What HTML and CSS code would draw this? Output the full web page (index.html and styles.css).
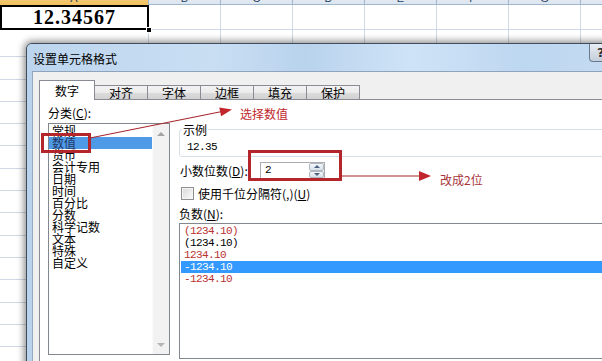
FILE: index.html
```html
<!DOCTYPE html>
<html lang="zh-CN">
<head>
<meta charset="UTF-8" />
<meta name="viewport" content="width=device-width, initial-scale=1" />
<title>设置单元格格式</title>
<link rel="stylesheet" href="styles.css">
</head>
<body>

<div class="sheet">
  <div class="col-heads">
    <div class="ch ch-a">A</div>
    <div class="ch">B</div>
    <div class="ch">C</div>
    <div class="ch">D</div>
    <div class="ch">E</div>
    <div class="ch">F</div>
    <div class="ch">G</div>
    <div class="ch">H</div>
  </div>
  <div class="row1">
    <div class="cell cell-a"><div class="sel">12.34567</div><span class="handle"></span></div>
    <div class="cell"></div>
    <div class="cell"></div>
    <div class="cell"></div>
    <div class="cell"></div>
    <div class="cell"></div>
    <div class="cell"></div>
    <div class="cell"></div>
  </div>
  <div class="rest">
    <div class="col"></div>
    <div class="col"></div>
    <div class="col"></div>
    <div class="col"></div>
    <div class="col"></div>
    <div class="col"></div>
    <div class="col"></div>
    <div class="col"></div>
  </div>
</div>

<div class="dialog">
  <div class="titlebar">
    <span class="title">设置单元格格式</span>
    <span class="help">?</span>
  </div>
  <div class="client">
    <div class="tabs">
      <div class="tab active">数字</div>
      <div class="tab">对齐</div>
      <div class="tab">字体</div>
      <div class="tab">边框</div>
      <div class="tab">填充</div>
      <div class="tab">保护</div>
    </div>
    <div class="panel">
      <div class="left-col">
        <div class="lbl">分类(<u>C</u>):</div>
        <div class="listbox cat">
          <ul class="items">
            <li>常规</li>
            <li class="on">数值</li>
            <li>货币</li>
            <li>会计专用</li>
            <li>日期</li>
            <li>时间</li>
            <li>百分比</li>
            <li>分数</li>
            <li>科学记数</li>
            <li>文本</li>
            <li>特殊</li>
            <li>自定义</li>
          </ul>
          <div class="vscroll"><span class="arr up"></span><span class="arr down"></span></div>
        </div>
      </div>

      <div class="right-col">
        <fieldset class="sample">
          <legend>示例</legend>
          <div class="num">12.35</div>
        </fieldset>

        <div class="dec-row">
          <label class="dec-lbl">小数位数(<u>D</u>):</label>
          <div class="spin">
            <span class="spin-val num">2</span>
            <span class="spin-btns">
              <span class="sb"><span class="tri up"></span></span>
              <span class="sb"><span class="tri down"></span></span>
            </span>
          </div>
        </div>

        <div class="chk-row">
          <span class="chk"></span>
          <span>使用千位分隔符(,)(<u>U</u>)</span>
        </div>

        <div class="lbl neg-lbl">负数(<u>N</u>):</div>
        <div class="listbox neg">
          <ul class="items num">
            <li class="red">(1234.10)</li>
            <li>(1234.10)</li>
            <li class="red">1234.10</li>
            <li class="on">-1234.10</li>
            <li class="red">-1234.10</li>
          </ul>
        </div>
      </div>
    </div>
  </div>
</div>

<!-- red annotation marks drawn on top of the screenshot -->
<svg class="marks" width="602" height="361" viewBox="0 0 602 361">
  <rect x="42.5" y="134.5" width="47" height="17" fill="none" stroke="#b3262c" stroke-width="3" />
  <line x1="90" y1="138" x2="222" y2="111.5" stroke="#a8282d" stroke-width="1.2" />
  <polygon points="232,109.5 221.1,116.3 219.3,107.5" fill="#c0262c" />

  <rect x="249.5" y="151.5" width="91" height="28" fill="none" stroke="#b3262c" stroke-width="3" />
  <line x1="342" y1="176" x2="421" y2="176" stroke="#a8282d" stroke-width="1.2" />
  <polygon points="431,176 419,171 419,181" fill="#c0262c" />
</svg>
<div class="note note-1">选择数值</div>
<div class="note note-2">改成2位</div>

</body>
</html>
```

FILE: styles.css
```css
  body {
    margin: 0;
    width: 602px;
    height: 361px;
    overflow: hidden;
    position: relative;
    background: #fff;
    font-family: "Noto Sans CJK SC", "Liberation Sans", sans-serif;
    font-size: 12px;
    color: #000;
  }
  ul {
    list-style: none;
    margin: 0;
    padding: 0;
  }
  u {
    text-decoration-thickness: 1px;
    text-underline-offset: 1px;
  }
  .num {
    font-family: "Liberation Mono", monospace;
    font-size: 11px;
    letter-spacing: -0.6px;
  }

  /* Spreadsheet behind the dialog */
  .sheet {
    width: 602px;
    height: 361px;
  }
  .col-heads, .row1, .rest {
    display: grid;
    grid-template-columns: 149px repeat(7, 72px);
  }
  .col-heads {
    height: 18px;
    margin-top: -14px;
    background: linear-gradient(#f1f4f9, #dde5ef);
    border-bottom: 1px solid #9eb6ce;
  }
  .ch {
    box-sizing: border-box;
    border-right: 1px solid #9eb6ce;
    text-align: center;
    font-family: "Liberation Sans", sans-serif;
    font-size: 11px;
    line-height: 13px;
    padding-top: 6px;
    color: #27415f;
  }
  .ch-a {
    background: linear-gradient(#f9d99f, #f1c15f);
  }
  .row1 {
    height: 25px;
  }
  .cell {
    border-right: 1px solid #d0d7e5;
    border-bottom: 1px solid #d0d7e5;
  }
  .cell-a {
    position: relative;
    border: none;
  }
  .sel {
    height: 100%;
    box-sizing: border-box;
    border: 2px solid #000;
    text-align: center;
    font-family: "Liberation Serif", serif;
    font-weight: bold;
    font-size: 20px;
    letter-spacing: 1px;
    line-height: 21px;
  }
  .handle {
    position: absolute;
    right: -3px;
    bottom: -3px;
    width: 4px;
    height: 4px;
    background: #000;
    border: 1px solid #fff;
  }
  .rest {
    height: 340px;
    background: repeating-linear-gradient(to bottom, transparent 0 21.3px, #d0d7e5 21.3px 22.3px);
    background-position: 0 5px;
  }
  .col {
    border-right: 1px solid #d0d7e5;
  }

  /* Dialog window */
  .dialog {
    position: absolute;
    left: 26px;
    top: 43px;
    width: 620px;
    height: 340px;
    border: 1px solid #3e4c5e;
    border-radius: 6px 6px 0 0;
    background: #bad3ec;
    box-shadow: 0 0 7px 2px rgba(0, 0, 0, 0.45);
    overflow: hidden;
  }
  .titlebar {
    height: 27px;
    display: flex;
    align-items: center;
    padding: 3px 0 0 6px;
    box-sizing: border-box;
    background: linear-gradient(to right, #bcd5ee 0%, #c9def3 30%, #b9d3ed 45%, #cfe3f7 62%, #bdd7f0 80%, #c6dcf2 100%);
  }
  .title {
    line-height: 14px;
    font-size: 12px;
  }
  .help {
    align-self: flex-start;
    margin: -3px 18px 0 auto;
    width: 40px;
    height: 18px;
    box-sizing: border-box;
    padding-left: 7px;
    border: 1px solid #6b7b8f;
    border-top: none;
    border-radius: 0 0 4px 4px;
    background: linear-gradient(#e9eef4, #c3cedb);
    font-family: "DejaVu Sans", sans-serif;
    font-weight: bold;
    font-size: 13px;
    line-height: 17px;
    color: #2b2b2b;
  }
  .client {
    margin-left: 5px;
    height: 300px;
    background: #f0f0f0;
    border-top: 1px solid #8fa3ba;
    border-left: 1px solid #95a8bd;
    padding: 8px 0 0 6px;
  }

  /* Tabs */
  .tabs {
    display: flex;
    align-items: flex-end;
    position: relative;
    z-index: 1;
    margin-bottom: -1px;
  }
  .tab {
    box-sizing: border-box;
    width: 53px;
    height: 14px;
    margin-bottom: 1px;
    border: 1px solid #898c95;
    border-left: none;
    border-bottom: none;
    background: linear-gradient(#f3f3f3, #ebebeb 50%, #dcdcdc 51%, #d2d2d2);
    text-align: center;
    line-height: 13px;
  }
  .tab.active {
    width: 56px;
    height: 20px;
    margin-bottom: 0;
    border-left: 1px solid #898c95;
    background: #fff;
    line-height: 20px;
  }

  /* Tab page */
  .panel {
    display: flex;
    width: 600px;
    height: 270px;
    background: #fff;
    border: 1px solid #898c95;
  }
  .lbl {
    line-height: 12px;
  }
  .left-col {
    width: 122px;
    margin-left: 8px;
    padding-top: 7px;
  }
  .left-col .lbl {
    margin-bottom: 4px;
  }
  .listbox {
    box-sizing: border-box;
    border: 1px solid #828790;
    background: #fff;
    display: flex;
  }
  .listbox.cat {
    height: 232px;
  }
  .items {
    flex: 1;
  }
  .cat .items {
    padding-top: 1px;
  }
  .cat .items li {
    line-height: 12px;
    padding-left: 3px;
  }
  .cat .items li.on {
    background: #4f9ae6;
    color: #1f3768;
  }
  .vscroll {
    width: 16px;
    background: #f2f2f2;
    border-left: 1px solid #fbfbfb;
    display: flex;
    flex-direction: column;
    justify-content: space-between;
    align-items: center;
    padding: 8px 0 7px;
  }
  .arr {
    width: 0;
    height: 0;
    border-left: 4px solid transparent;
    border-right: 4px solid transparent;
  }
  .arr.up {
    border-bottom: 4px solid #a4a4a4;
  }
  .arr.down {
    border-top: 4px solid #b4b4b4;
  }

  .right-col {
    width: 440px;
    margin-left: 9px;
    padding-top: 24px;
  }
  .sample {
    margin: 0;
    padding: 6px 7px 3px;
    border: 1px solid #d5dfe5;
    border-radius: 3px;
  }
  .sample legend {
    padding: 0 1px;
    margin-left: -5px;
    line-height: 11px;
  }
  .sample .num {
    line-height: 12px;
  }
  .dec-row {
    display: flex;
    align-items: center;
    margin-top: 5px;
  }
  .dec-lbl {
    width: 80px;
    padding-left: 1px;
    line-height: 12px;
  }
  .spin {
    box-sizing: border-box;
    width: 65px;
    height: 17px;
    border: 1px solid #abadb3;
    display: flex;
    justify-content: space-between;
  }
  .spin-val {
    padding-left: 4px;
    line-height: 15px;
  }
  .spin-btns {
    width: 15px;
    display: flex;
    flex-direction: column;
  }
  .sb {
    flex: 1;
    box-sizing: border-box;
    border: 1px solid #b1b8c1;
    border-radius: 2px;
    background: linear-gradient(#f3f6fa, #d8e1eb);
    display: flex;
    align-items: center;
    justify-content: center;
  }
  .tri {
    width: 0;
    height: 0;
    border-left: 3px solid transparent;
    border-right: 3px solid transparent;
  }
  .tri.up {
    border-bottom: 3px solid #4d6185;
  }
  .tri.down {
    border-top: 3px solid #4d6185;
  }
  .chk-row {
    display: flex;
    align-items: center;
    gap: 4px;
    margin-top: 8px;
    padding-left: 2px;
    line-height: 13px;
  }
  .chk {
    box-sizing: border-box;
    width: 13px;
    height: 13px;
    border: 1px solid #8e8f8f;
    background: linear-gradient(135deg, #d8d8d8, #fbfbfb);
    box-shadow: inset 0 0 0 1px #f4f4f4;
  }
  .neg-lbl {
    margin: 8px 0 3px;
  }
  .listbox.neg {
    height: 136px;
    padding: 1px 0 0 1px;
  }
  .neg .items li {
    line-height: 12px;
    padding-left: 3px;
  }
  .neg .items li.red {
    color: #b83232;
  }
  .neg .items li.on {
    background: #3399ff;
    color: #fff;
  }

  /* Annotations */
  .marks {
    position: absolute;
    left: 0;
    top: 0;
    pointer-events: none;
  }
  .note {
    position: absolute;
    font-size: 12px;
    line-height: 14px;
    color: #c0282d;
  }
  .note-1 {
    left: 240px;
    top: 107px;
  }
  .note-2 {
    left: 440px;
    top: 173px;
    color: #a8343a;
  }
```
